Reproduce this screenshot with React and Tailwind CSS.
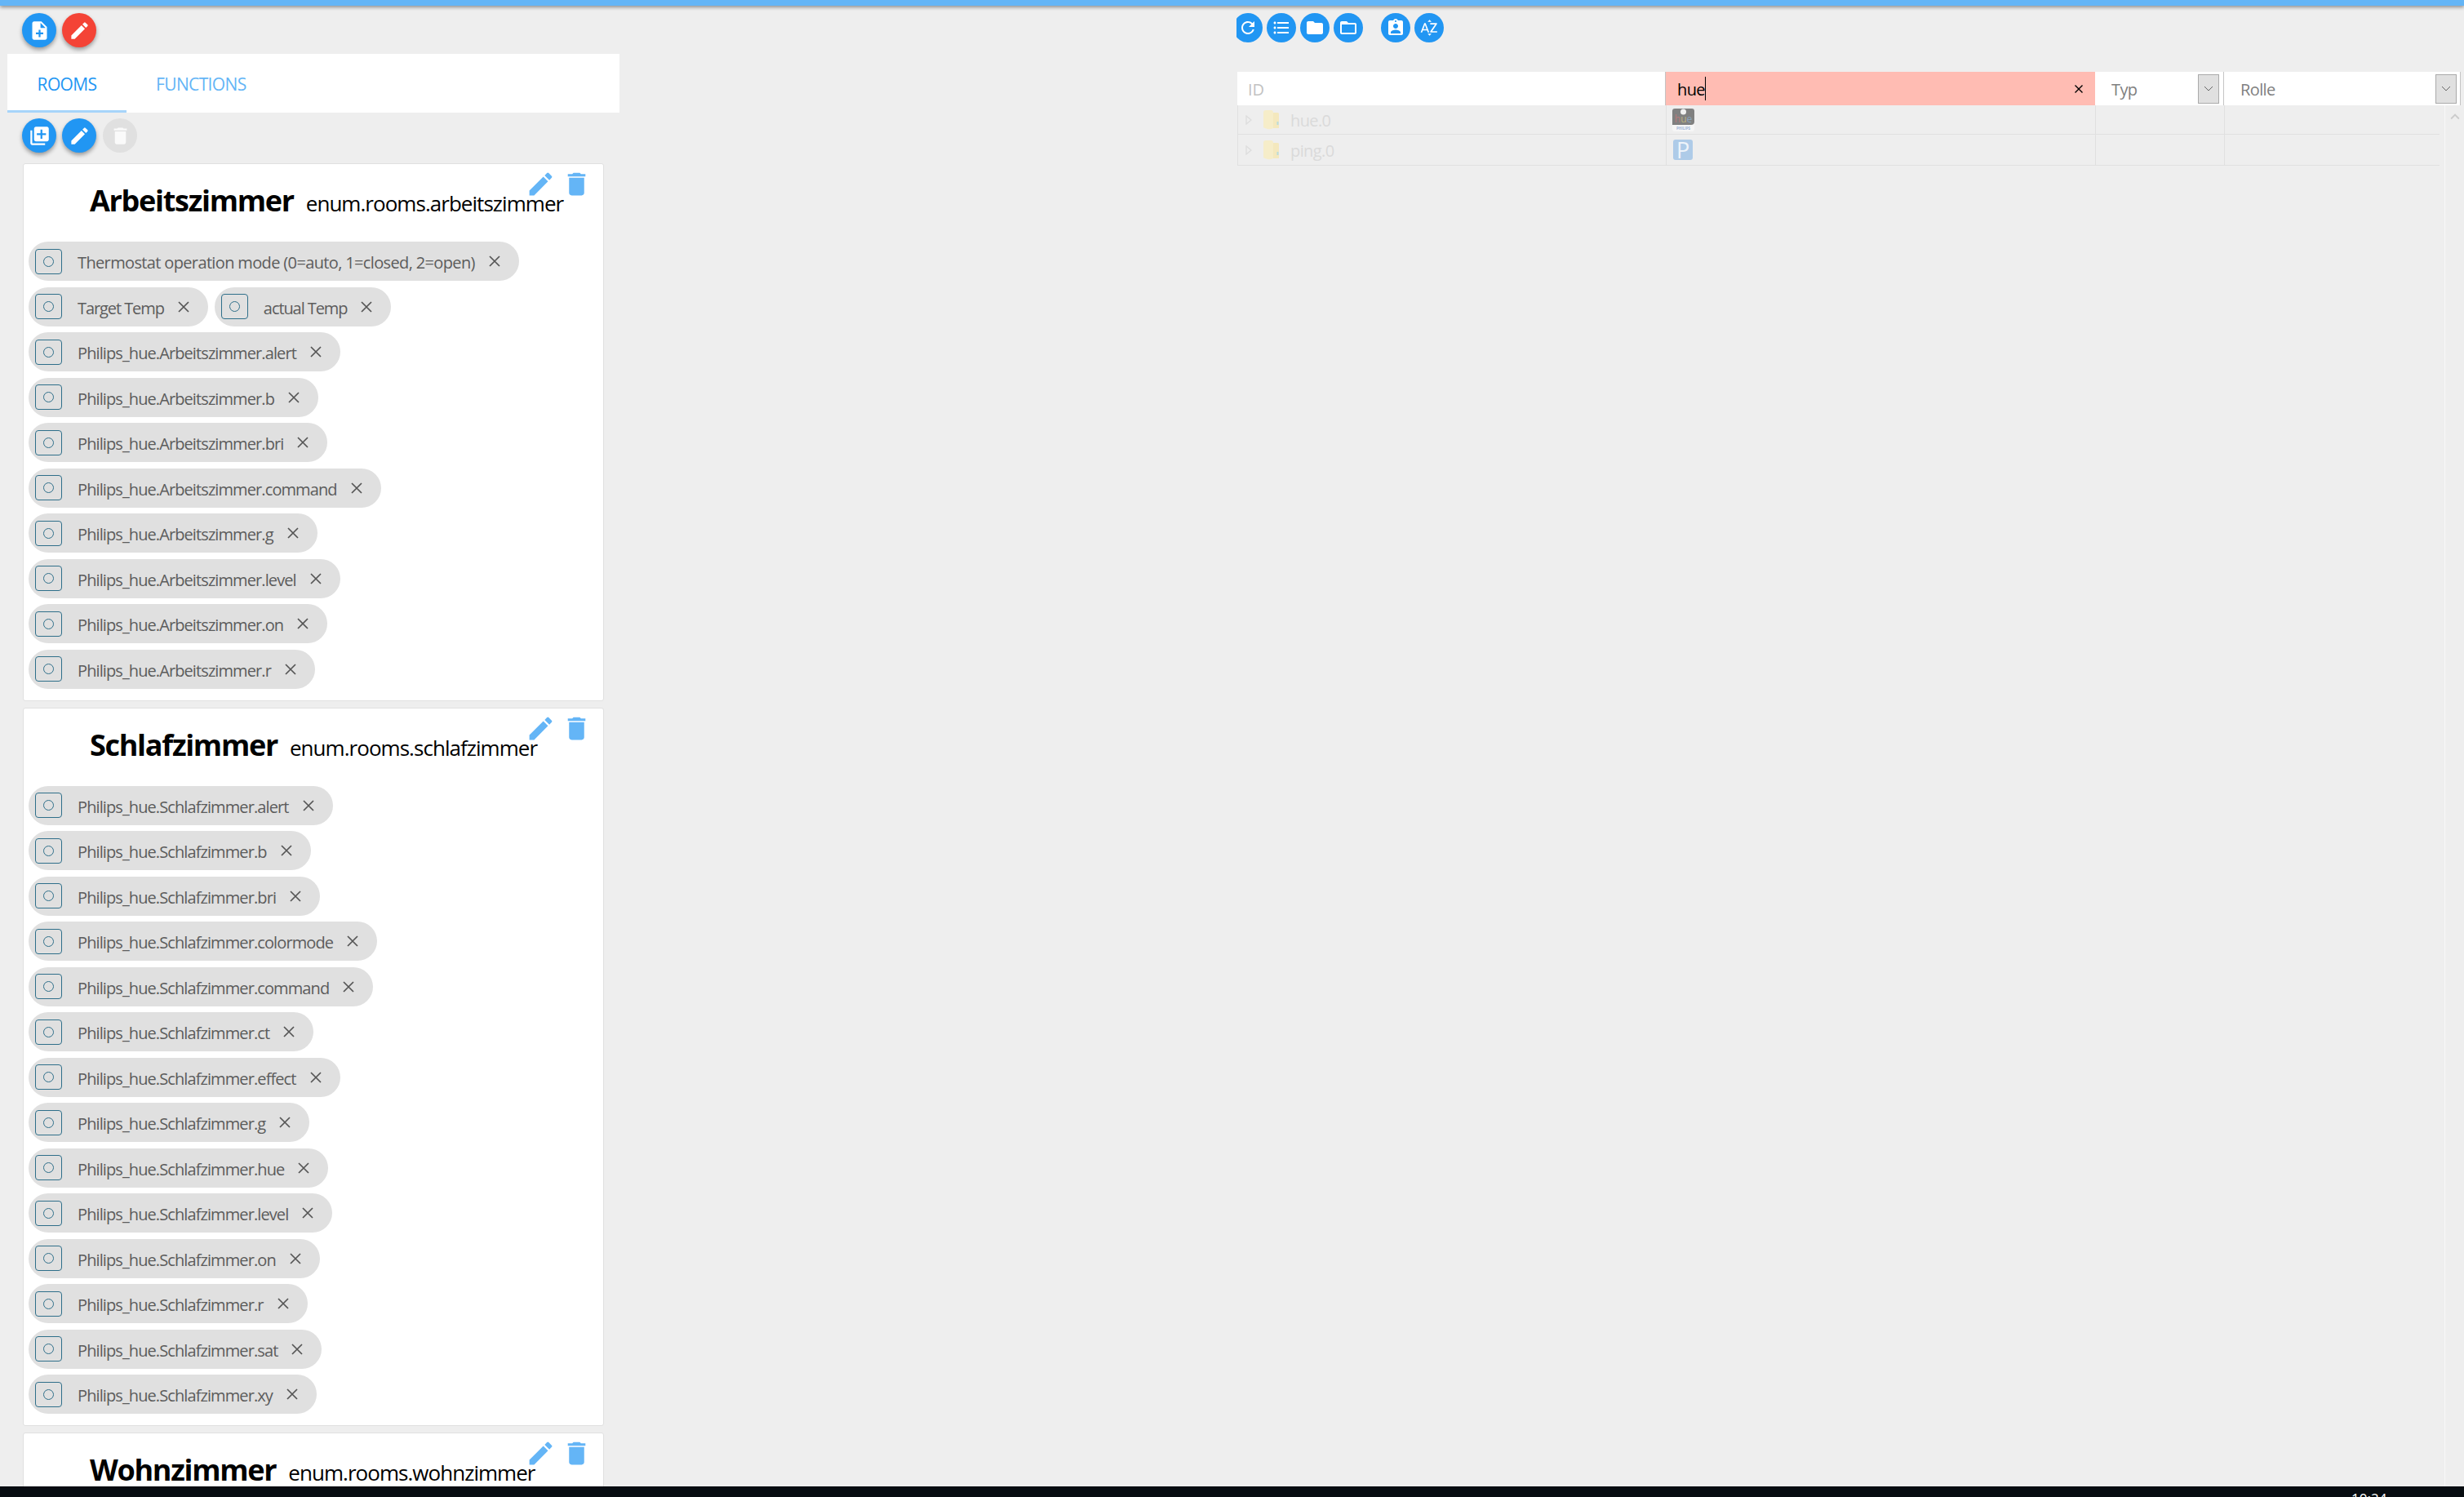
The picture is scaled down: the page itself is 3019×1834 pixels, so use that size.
import {
  MdNoteAdd,
  MdEdit,
  MdLibraryAdd,
  MdDelete,
  MdRefresh,
  MdFormatListBulleted,
  MdFolder,
  MdFolderOpen,
  MdAssignmentInd,
  MdSortByAlpha,
  MdKeyboardArrowUp,
} from "react-icons/md";

const ROOMS = [
  {
    name: "Arbeitszimmer",
    id: "enum.rooms.arbeitszimmer",
    rows: [
      ["Thermostat operation mode (0=auto, 1=closed, 2=open)"],
      ["Target Temp", "actual Temp"],
      ["Philips_hue.Arbeitszimmer.alert"],
      ["Philips_hue.Arbeitszimmer.b"],
      ["Philips_hue.Arbeitszimmer.bri"],
      ["Philips_hue.Arbeitszimmer.command"],
      ["Philips_hue.Arbeitszimmer.g"],
      ["Philips_hue.Arbeitszimmer.level"],
      ["Philips_hue.Arbeitszimmer.on"],
      ["Philips_hue.Arbeitszimmer.r"],
    ],
  },
  {
    name: "Schlafzimmer",
    id: "enum.rooms.schlafzimmer",
    rows: [
      ["Philips_hue.Schlafzimmer.alert"],
      ["Philips_hue.Schlafzimmer.b"],
      ["Philips_hue.Schlafzimmer.bri"],
      ["Philips_hue.Schlafzimmer.colormode"],
      ["Philips_hue.Schlafzimmer.command"],
      ["Philips_hue.Schlafzimmer.ct"],
      ["Philips_hue.Schlafzimmer.effect"],
      ["Philips_hue.Schlafzimmer.g"],
      ["Philips_hue.Schlafzimmer.hue"],
      ["Philips_hue.Schlafzimmer.level"],
      ["Philips_hue.Schlafzimmer.on"],
      ["Philips_hue.Schlafzimmer.r"],
      ["Philips_hue.Schlafzimmer.sat"],
      ["Philips_hue.Schlafzimmer.xy"],
    ],
  },
  {
    name: "Wohnzimmer",
    id: "enum.rooms.wohnzimmer",
    rows: [],
  },
];

// a few labels run wider or narrower than the Philips ones
const LABEL_TRACKING = {
  "Thermostat operation mode (0=auto, 1=closed, 2=open)": "tracking-[-0.032em]",
  "Target Temp": "tracking-[-0.054em]",
  "actual Temp": "tracking-[-0.054em]",
};

function Fab({ icon: Icon, color = "bg-[#2196f3]" }) {
  return (
    <button className={`w-[42px] h-[42px] rounded-full flex items-center justify-center text-white shadow-[0_3px_5px_rgba(0,0,0,0.35)] ${color}`}>
      <Icon size={27} />
    </button>
  );
}

function SmallFab({ icon: Icon }) {
  return (
    <button className="w-[36px] h-[36px] shrink-0 rounded-full bg-[#2196f3] flex items-center justify-center text-white">
      <Icon size={24} />
    </button>
  );
}

function Chip({ label }) {
  const tracking = LABEL_TRACKING[label] || "tracking-[-0.045em]";

  return (
    <div className="h-[48px] rounded-full bg-[#e0e0e0] flex items-center pl-[8px] pr-[23px]">
      <div className="w-[33px] h-[31px] rounded-[4px] border-[1.5px] border-[#2f6f8a] flex items-center justify-center">
        <div className="w-[13px] h-[13px] rounded-full border border-[#2f6f8a]" />
      </div>
      <span className={`ml-[19px] pt-[4px] text-[20px] text-[#5c5c5c] whitespace-nowrap ${tracking}`}>
        {label}
      </span>
      <svg viewBox="0 0 14 14" className="ml-[17px] w-[14px] h-[14px] text-[#555555]">
        <path d="M1 1L13 13M13 1L1 13" stroke="currentColor" strokeWidth="1.7" fill="none" />
      </svg>
    </div>
  );
}

function RoomCard({ room }) {
  return (
    <div className="relative w-[712px] shrink-0 bg-white border border-[#e0e0e0] rounded-[3px] pb-[14px]">
      <div className="absolute top-[6px] right-[14px] flex items-center gap-[7px] text-[#64b5f6]">
        <MdEdit size={37} />
        <MdDelete size={37} />
      </div>
      <div className="h-[95px] pl-[81px] pt-[18px] flex items-baseline text-black whitespace-nowrap">
        <span className="text-[36px] font-bold tracking-[-0.036em]">{room.name}</span>
        <span className="ml-[15px] text-[26px] tracking-[-0.037em]">{room.id}</span>
      </div>
      <div className="flex flex-col gap-[7.5px] pl-[6px]">
        {room.rows.map((row, i) => (
          <div key={i} className="flex gap-[8px]">
            {row.map((label) => (
              <Chip key={label} label={label} />
            ))}
          </div>
        ))}
      </div>
    </div>
  );
}

function FolderIcon() {
  return (
    <svg viewBox="0 0 19 24" className="w-[19px] h-[24px] shrink-0">
      <path d="M0 3Q0 0 3 0H9Q12 0 12 3V3H17Q19 3 19 5V20Q19 22 17 22H12Q9 24 5 23L2 22Q0 22 0 20Z" fill="#f6edc9" />
      <path d="M12 3V22H19V5Q19 3 17 3Z" fill="#f4e8bd" />
      <rect x="16.5" y="14" width="2" height="4" fill="#b9dcdc" />
    </svg>
  );
}

function HueIcon() {
  return (
    <svg viewBox="0 0 27 28" className="w-[27px] h-[28px]">
      <rect width="27" height="28" rx="3" fill="#f6f6f6" />
      <path d="M3 0H24Q27 0 27 3V16Q27 20 23 20H0V3Q0 0 3 0Z" fill="#808080" />
      <circle cx="13.5" cy="4" r="3.5" fill="#f0f0f0" />
      <text x="13.5" y="17" textAnchor="middle" fontSize="12">
        <tspan fill="#b87a7a">h</tspan>
        <tspan fill="#b8b080">u</tspan>
        <tspan fill="#8aa4bc">e</tspan>
      </text>
      <text x="13.5" y="26" textAnchor="middle" fontSize="4.5" fontWeight="700" fill="#9db4d8">PHILIPS</text>
    </svg>
  );
}

function TreeRow({ name, children, rowHeight }) {
  return (
    <div className={`flex border-b border-[#e0e0e0] ${rowHeight}`}>
      <div className="w-[525px] shrink-0 border-r border-[#e0e0e0] flex items-center pl-[9px]">
        <svg viewBox="0 0 8 12" className="w-[8px] h-[12px] shrink-0">
          <path d="M1 1L7 6L1 11Z" fill="none" stroke="#dddddd" strokeWidth="1.3" />
        </svg>
        <div className="ml-[14px]">
          <FolderIcon />
        </div>
        <span className="ml-[14px] pt-[2px] text-[20px] text-[#dadada] tracking-[-0.03em]">{name}</span>
      </div>
      <div className="w-[526px] shrink-0 border-r border-[#e0e0e0] pl-[7px] flex items-center">
        {children}
      </div>
      <div className="w-[158px] shrink-0 border-r border-[#e0e0e0]" />
      <div className="flex-1" />
    </div>
  );
}

function SelectFilter({ label, className }) {
  return (
    <div className={`h-full bg-white border-r border-[#c4c4c4] flex items-center justify-between pl-[20px] ${className}`}>
      <span className="text-[20px] text-[#808080] pt-[3px] tracking-[-0.03em]">{label}</span>
      <div className="w-[26px] h-[36px] bg-[#e0e0e0] border border-[#aaaaaa] flex items-center justify-center">
        <svg viewBox="0 0 12 7" className="w-[12px] h-[7px]">
          <path d="M1 1L6 6L11 1" fill="none" stroke="#666666" strokeWidth="1" />
        </svg>
      </div>
    </div>
  );
}

export default function App() {
  return (
    <div className="w-[3019px] h-[1834px] overflow-hidden flex flex-col bg-[#eeeeee] font-['Open_Sans',sans-serif]">
      <div className="h-[7px] shrink-0 bg-[#64b5f6] shadow-[0_2px_4px_rgba(0,0,0,0.4)]" />

      <div className="flex-1 min-h-0 flex">
        {/* ===== ROOMS / FUNCTIONS ===== */}
        <div className="w-[1515px] shrink-0 flex flex-col overflow-hidden pt-[9px]">
          <div className="flex gap-[7px] pl-[27px]">
            <Fab icon={MdNoteAdd} />
            <Fab icon={MdEdit} color="bg-[#f44336]" />
          </div>

          <div className="mt-[8px] ml-[9px] w-[750px] h-[72px] shrink-0 bg-white flex">
            <div className="w-[146px] h-full pt-[6px] border-b-[3px] border-[#a6d4fa] flex items-center justify-center text-[21px] text-[#2196f3] tracking-[-0.03em]">
              ROOMS
            </div>
            <div className="ml-[36px] h-full pt-[3px] flex items-center text-[21px] text-[#64b5f6] tracking-[-0.03em]">
              FUNCTIONS
            </div>
          </div>

          <div className="mt-[7px] flex gap-[7px] pl-[27px]">
            <Fab icon={MdLibraryAdd} />
            <Fab icon={MdEdit} />
            <button className="w-[42px] h-[42px] ml-[1px] rounded-full bg-[#e0e0e0] flex items-center justify-center text-[#fafafa]">
              <MdDelete size={27} />
            </button>
          </div>

          <div className="mt-[13px] ml-[28px] flex flex-col gap-[8px]">
            {ROOMS.map((room) => (
              <RoomCard key={room.id} room={room} />
            ))}
          </div>
        </div>

        {/* ===== OBJECT BROWSER ===== */}
        <div className="flex-1 min-w-0 overflow-hidden relative">
          <div className="pt-[9px] flex items-center -ml-[4px]">
            <div className="flex gap-[5px]">
              <SmallFab icon={MdRefresh} />
              <SmallFab icon={MdFormatListBulleted} />
              <SmallFab icon={MdFolder} />
              <SmallFab icon={MdFolderOpen} />
            </div>
            <div className="ml-[22px] flex gap-[5px]">
              <SmallFab icon={MdAssignmentInd} />
              <SmallFab icon={MdSortByAlpha} />
            </div>
          </div>

          <div className="mt-[36px] ml-[1px] mr-[4px] h-[41px] flex">
            <div className="w-[525px] bg-white border-r border-[#c4c4c4] flex items-center pl-[13px] pt-[3px] text-[20px] text-[#c2c2c2]">
              ID
            </div>
            <div className="w-[526px] bg-[#ffbcb3] flex items-center pl-[14px] pr-[15px]">
              <span className="text-[20px] text-black pt-[3px] tracking-[-0.03em] border-r border-black leading-[26px]">hue</span>
              <svg viewBox="0 0 10 10" className="ml-auto w-[10px] h-[10px]">
                <path d="M0.5 0.5L9.5 9.5M9.5 0.5L0.5 9.5" stroke="#000000" strokeWidth="1.4" fill="none" />
              </svg>
            </div>
            <SelectFilter label="Typ" className="w-[158px] pr-[5px]" />
            <SelectFilter label="Rolle" className="flex-1 pr-[4px]" />
          </div>

          <div className="ml-[1px] w-[1473px] border-l border-[#e0e0e0]">
            <TreeRow name="hue.0" rowHeight="h-[36px]">
              <HueIcon />
            </TreeRow>
            <TreeRow name="ping.0" rowHeight="h-[38px]">
              <div className="ml-[1px] w-[24px] h-[25px] rounded-[3px] bg-[#aecbe8] flex items-center justify-center text-[27px] leading-none text-[#eef4fa]">
                P
              </div>
            </TreeRow>
          </div>

          {/* scrollbar */}
          <div className="absolute top-[122px] bottom-0 left-[1480px] right-0 pt-[3px] border-l border-[#f8f8f8] flex justify-center text-[#cccccc]">
            <MdKeyboardArrowUp size={22} />
          </div>
        </div>
      </div>

      <div className="h-[13px] shrink-0 bg-[#070c11] overflow-hidden relative">
        <span className="absolute left-[2881px] top-[5px] text-[17px] leading-[20px] text-white">10:24</span>
      </div>
    </div>
  );
}
